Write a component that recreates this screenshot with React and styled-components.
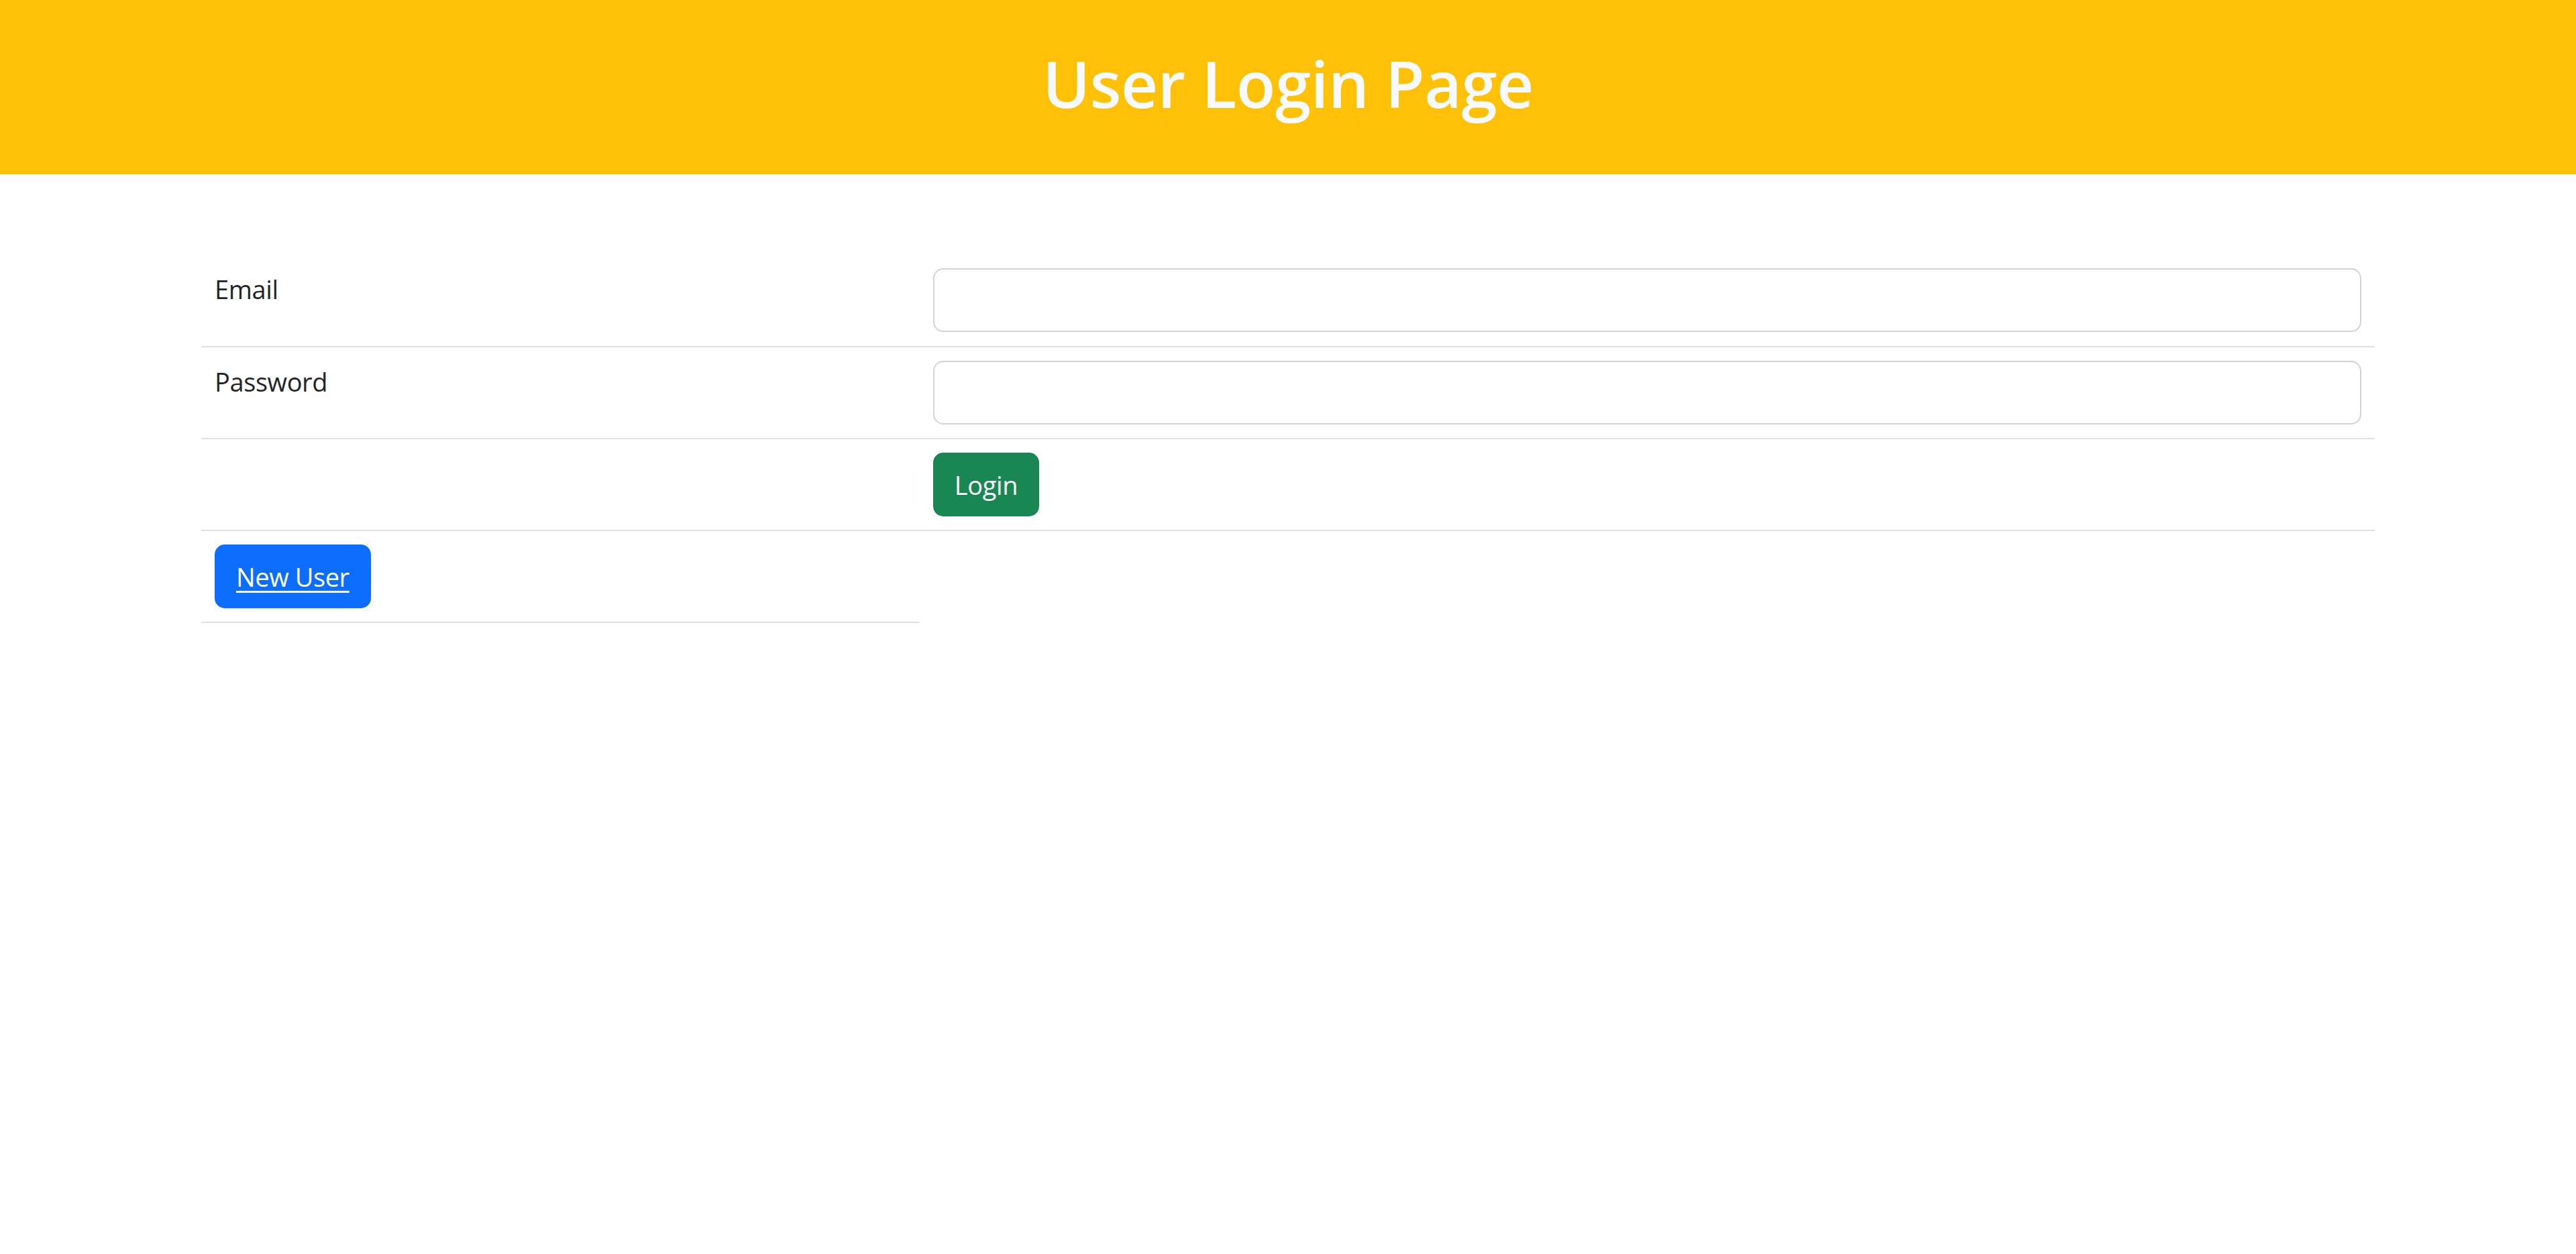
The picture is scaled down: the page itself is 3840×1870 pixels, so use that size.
import React from "react";
import styled, { createGlobalStyle } from "styled-components";

const GlobalStyle = createGlobalStyle`
  *, *::before, *::after { box-sizing: border-box; }
  html, body { margin: 0; padding: 0; background: #ffffff; }
  body {
    font-family: "Open Sans", "Noto Sans", "Liberation Sans", sans-serif;
    font-size: 38px;
    letter-spacing: -0.4px;
    line-height: 60px;
    color: #212529;
  }
`;

const Header = styled.header`
  background: #ffc107;
  padding: 64px 60px 56px;
  text-align: center;
`;

const Title = styled.h1`
  margin: 0 0 20px;
  font-size: 96px;
  font-weight: 600;
  letter-spacing: -0.5px;
  line-height: 120px;
  color: #f8f9fa;
`;

const Container = styled.main`
  max-width: 3300px;
  margin: 120px auto 0;
  padding: 0 30px;
`;

const Table = styled.table`
  width: 100%;
  border-collapse: collapse;
  table-layout: fixed;
`;

const Col = styled.col`
  width: ${(p) => p.$width};
`;

const Cell = styled.td`
  padding: 20px;
  vertical-align: top;
  border-bottom: 2px solid #dee2e6;
  height: 137px;
`;

const Label = styled.span`
  display: block;
  padding-top: 1px;
`;

const Input = styled.input`
  display: block;
  width: 100%;
  height: 95px;
  padding: 15px 30px;
  font: inherit;
  color: #212529;
  background: #fff;
  border: 2px solid #ced4da;
  border-radius: 15px;
  outline: none;
`;

const Button = styled.button`
  display: inline-block;
  height: 95px;
  padding: 15px 30px;
  font: inherit;
  letter-spacing: inherit;
  line-height: 60px;
  color: #fff;
  background: ${(p) => p.$bg};
  border: 2px solid ${(p) => p.$bg};
  border-radius: 15px;
  cursor: pointer;
`;

const ButtonLink = styled.a`
  color: #fff;
  text-decoration: underline;
  text-underline-offset: 6px;
  text-decoration-thickness: 3px;
`;

export default function App() {
  return (
    <>
      <GlobalStyle />
      <Header>
        <Title>User Login Page</Title>
      </Header>
      <Container>
        <Table>
          <colgroup>
            <Col $width="33.05%" />
            <Col $width="66.95%" />
          </colgroup>
          <tbody>
            <tr>
              <Cell>
                <Label>Email</Label>
              </Cell>
              <Cell>
                <Input type="email" />
              </Cell>
            </tr>
            <tr>
              <Cell>
                <Label>Password</Label>
              </Cell>
              <Cell>
                <Input type="password" />
              </Cell>
            </tr>
            <tr>
              <Cell />
              <Cell>
                <Button $bg="#198754">Login</Button>
              </Cell>
            </tr>
            <tr>
              <Cell>
                <Button $bg="#0d6efd">
                  <ButtonLink href="#">New User</ButtonLink>
                </Button>
              </Cell>
            </tr>
          </tbody>
        </Table>
      </Container>
    </>
  );
}
